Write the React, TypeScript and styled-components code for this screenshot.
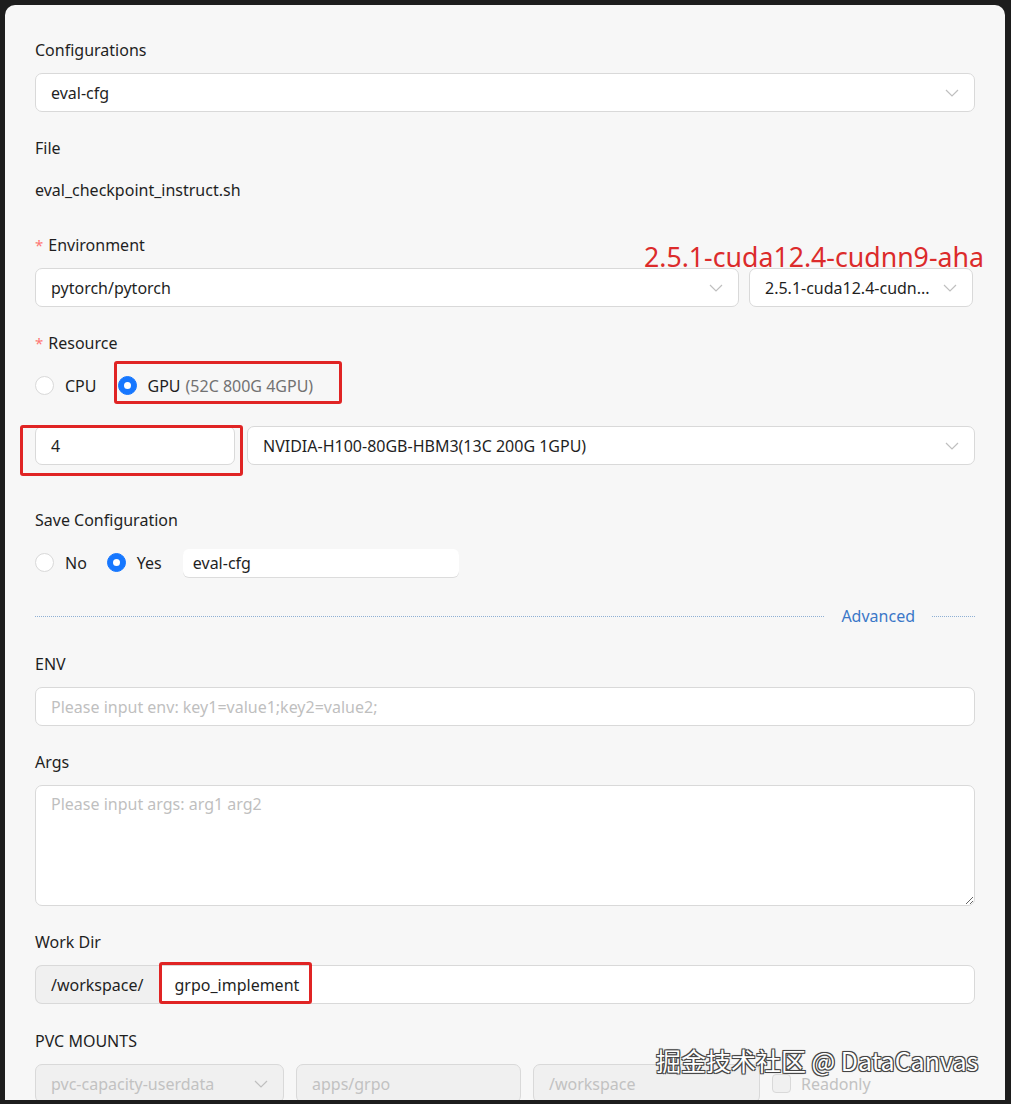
import React from 'react';
import styled, { createGlobalStyle } from 'styled-components';

const GlobalStyle = createGlobalStyle`
  html, body {
    margin: 0;
    padding: 0;
    background: #1d1d1d;
  }
  body {
    font-family: 'Noto Sans', 'Open Sans', sans-serif;
  }
  * {
    box-sizing: border-box;
  }
`;

const Panel = styled.div`
  position: relative;
  width: 1000px;
  height: 1095px;
  margin: 5px 0 0 5px;
  padding: 32px 30px 0;
  background: #f7f7f7;
  border-radius: 10px 10px 0 0;
  overflow: hidden;
  font-size: 16px;
  color: #1f1f1f;
`;

const FormItem = styled.div<{ $gap?: number }>`
  margin-bottom: ${(p) => (p.$gap ?? 23)}px;
`;

const Label = styled.div`
  display: flex;
  align-items: center;
  height: 26px;
  margin-bottom: 10px;
`;

const Star = styled.span`
  color: #ff7875;
  font-size: 15px;
  margin-right: 5px;
`;

const TextValue = styled.div`
  height: 39px;
  line-height: 39px;
`;

const Box = styled.div<{ $width?: number; $disabled?: boolean }>`
  display: flex;
  align-items: center;
  justify-content: space-between;
  height: 39px;
  padding: 0 15px;
  border: 1px solid #d9d9d9;
  border-radius: 7px;
  background: ${(p) => (p.$disabled ? '#f0f0f0' : '#fff')};
  color: ${(p) => (p.$disabled ? '#c2c2c2' : '#1f1f1f')};
  ${(p) => (p.$width ? `width: ${p.$width}px; flex: none;` : 'flex: 1;')}
  min-width: 0;
  white-space: nowrap;
`;

const Placeholder = styled.span`
  color: #bfbfbf;
`;

const Row = styled.div<{ $gap?: number; $padRight?: number }>`
  display: flex;
  align-items: center;
  gap: ${(p) => p.$gap ?? 10}px;
  padding-right: ${(p) => p.$padRight ?? 0}px;
`;

const Chevron = () => (
  <svg width="14" height="8" viewBox="0 0 14 8" fill="none">
    <polyline points="1,1 7,7 13,1" stroke="#bfbfbf" strokeWidth="1.2" />
  </svg>
);

const Select = ({ value, width, disabled }: { value: string; width?: number; disabled?: boolean }) => (
  <Box $width={width} $disabled={disabled}>
    <span>{value}</span>
    <Chevron />
  </Box>
);

const RadioRow = styled.div`
  display: flex;
  align-items: center;
  height: 39px;
`;

const RadioOption = styled.div<{ $gap?: number }>`
  position: relative;
  display: flex;
  align-items: center;
  height: 26px;
  margin-right: ${(p) => p.$gap ?? 21}px;
`;

const RadioDot = styled.span<{ $checked?: boolean }>`
  position: relative;
  width: 19px;
  height: 19px;
  border-radius: 50%;
  background: ${(p) => (p.$checked ? '#1677ff' : '#fff')};
  border: 1px solid ${(p) => (p.$checked ? '#1677ff' : '#d9d9d9')};
  margin-right: 11px;

  &::after {
    content: '';
    display: ${(p) => (p.$checked ? 'block' : 'none')};
    position: absolute;
    left: 50%;
    top: 50%;
    width: 7px;
    height: 7px;
    margin: -3.5px 0 0 -3.5px;
    border-radius: 50%;
    background: #fff;
  }
`;

const Muted = styled.span`
  color: #727272;
  margin-left: 5px;
`;

const Highlight = styled.div<{ $l: number; $t: number; $r: number; $b: number }>`
  position: absolute;
  left: ${(p) => p.$l}px;
  top: ${(p) => p.$t}px;
  right: ${(p) => p.$r}px;
  bottom: ${(p) => p.$b}px;
  border: 3px solid #e02424;
  border-radius: 3px;
  pointer-events: none;
`;

const Anchor = styled.div<{ $width?: number }>`
  position: relative;
  ${(p) => (p.$width ? `width: ${p.$width}px; flex: none;` : 'flex: 1;')}
  display: flex;
`;

const NameInput = styled.div`
  display: flex;
  align-items: center;
  width: 276px;
  height: 28px;
  padding: 0 10px;
  background: #fff;
  border-radius: 6px;
  box-shadow: 0 1px 0 #dcdcdc;
`;

const DividerRow = styled.div`
  display: flex;
  align-items: center;
  height: 34px;
  margin: 17px 0 18px;
`;

const DottedLine = styled.div<{ $width?: number }>`
  ${(p) => (p.$width ? `width: ${p.$width}px;` : 'flex: 1;')}
  border-top: 1px dotted #8fb0d4;
`;

const DividerText = styled.span`
  padding: 0 17px;
  color: #3b78c8;
`;

const TextArea = styled.textarea`
  display: block;
  width: 100%;
  height: 121px;
  padding: 7px 15px;
  border: 1px solid #d9d9d9;
  border-radius: 7px;
  background: #fff;
  font: inherit;
  color: #1f1f1f;
  resize: vertical;
  outline: none;

  &::placeholder {
    color: #bfbfbf;
  }
`;

const AddonGroup = styled.div`
  display: flex;
  height: 39px;
`;

const Addon = styled.div`
  display: flex;
  align-items: center;
  padding: 0 15px;
  background: #f0f0f0;
  border: 1px solid #d9d9d9;
  border-right: none;
  border-radius: 7px 0 0 7px;
`;

const AddonInput = styled.div`
  position: relative;
  flex: 1;
  display: flex;
  align-items: center;
  padding: 0 15px;
  background: #fff;
  border: 1px solid #d9d9d9;
  border-radius: 0 7px 7px 0;
`;

const CheckBox = styled.span`
  width: 19px;
  height: 19px;
  border: 1px solid #d9d9d9;
  border-radius: 4px;
  background: #f0f0f0;
  margin-right: 10px;
`;

const CheckLabel = styled.div`
  display: flex;
  align-items: center;
  color: #c2c2c2;
  flex: none;
`;

const Annotation = styled.div`
  position: absolute;
  left: 639px;
  top: 234px;
  font-size: 26.7px;
  line-height: 36px;
  color: #dc2b2b;
  white-space: nowrap;
`;

const Watermark = styled.div`
  position: absolute;
  left: 651px;
  top: 1038px;
  font-family: 'Noto Sans CJK SC', 'Noto Sans', sans-serif;
  font-size: 25px;
  line-height: 34px;
  color: #fff;
  white-space: nowrap;
  text-shadow: -1px -1px 0 #444, 1px -1px 0 #444, -1px 1px 0 #444, 1px 1px 0 #444, 0 0 2px #000;
`;

const App = () => (
  <>
    <GlobalStyle />
    <Panel>
      <FormItem>
        <Label>Configurations</Label>
        <Select value="eval-cfg" />
      </FormItem>

      <FormItem $gap={22}>
        <Label>File</Label>
        <TextValue>eval_checkpoint_instruct.sh</TextValue>
      </FormItem>

      <FormItem>
        <Label>
          <Star>*</Star>Environment
        </Label>
        <Row $gap={10} $padRight={2}>
          <Select value="pytorch/pytorch" />
          <Select value="2.5.1-cuda12.4-cudn..." width={224} />
        </Row>
      </FormItem>

      <FormItem $gap={21}>
        <Label>
          <Star>*</Star>Resource
        </Label>
        <RadioRow>
          <RadioOption>
            <RadioDot />
            CPU
          </RadioOption>
          <RadioOption>
            <RadioDot $checked />
            GPU<Muted>(52C 800G 4GPU)</Muted>
            <Highlight $l={-4} $t={-12} $r={-29} $b={-5} />
          </RadioOption>
        </RadioRow>
      </FormItem>

      <FormItem $gap={42}>
        <Row $gap={12}>
          <Anchor $width={200}>
            <Box>4</Box>
            <Highlight $l={-15} $t={-1} $r={-8} $b={-11} />
          </Anchor>
          <Select value="NVIDIA-H100-80GB-HBM3(13C 200G 1GPU)" />
        </Row>
      </FormItem>

      <FormItem $gap={0}>
        <Label>Save Configuration</Label>
        <RadioRow>
          <RadioOption $gap={20}>
            <RadioDot />
            No
          </RadioOption>
          <RadioOption>
            <RadioDot $checked />
            Yes
          </RadioOption>
          <NameInput>eval-cfg</NameInput>
        </RadioRow>
      </FormItem>

      <DividerRow>
        <DottedLine />
        <DividerText>Advanced</DividerText>
        <DottedLine $width={43} />
      </DividerRow>

      <FormItem>
        <Label>ENV</Label>
        <Box>
          <Placeholder>Please input env: key1=value1;key2=value2;</Placeholder>
        </Box>
      </FormItem>

      <FormItem>
        <Label>Args</Label>
        <TextArea placeholder="Please input args: arg1 arg2" />
      </FormItem>

      <FormItem $gap={24}>
        <Label>Work Dir</Label>
        <AddonGroup>
          <Addon>/workspace/</Addon>
          <AddonInput>
            grpo_implement
            <Highlight $l={-1} $t={-4} $r={662} $b={-1} />
          </AddonInput>
        </AddonGroup>
      </FormItem>

      <FormItem $gap={0}>
        <Label>PVC MOUNTS</Label>
        <Row $gap={12}>
          <Select value="pvc-capacity-userdata" width={249} disabled />
          <Box $width={225} $disabled>
            apps/grpo
          </Box>
          <Box $width={227} $disabled>
            /workspace
          </Box>
          <CheckLabel>
            <CheckBox />
            Readonly
          </CheckLabel>
        </Row>
      </FormItem>

      <Annotation>2.5.1-cuda12.4-cudnn9-aha</Annotation>
      <Watermark>掘金技术社区 @ DataCanvas</Watermark>
    </Panel>
  </>
);

export default App;
